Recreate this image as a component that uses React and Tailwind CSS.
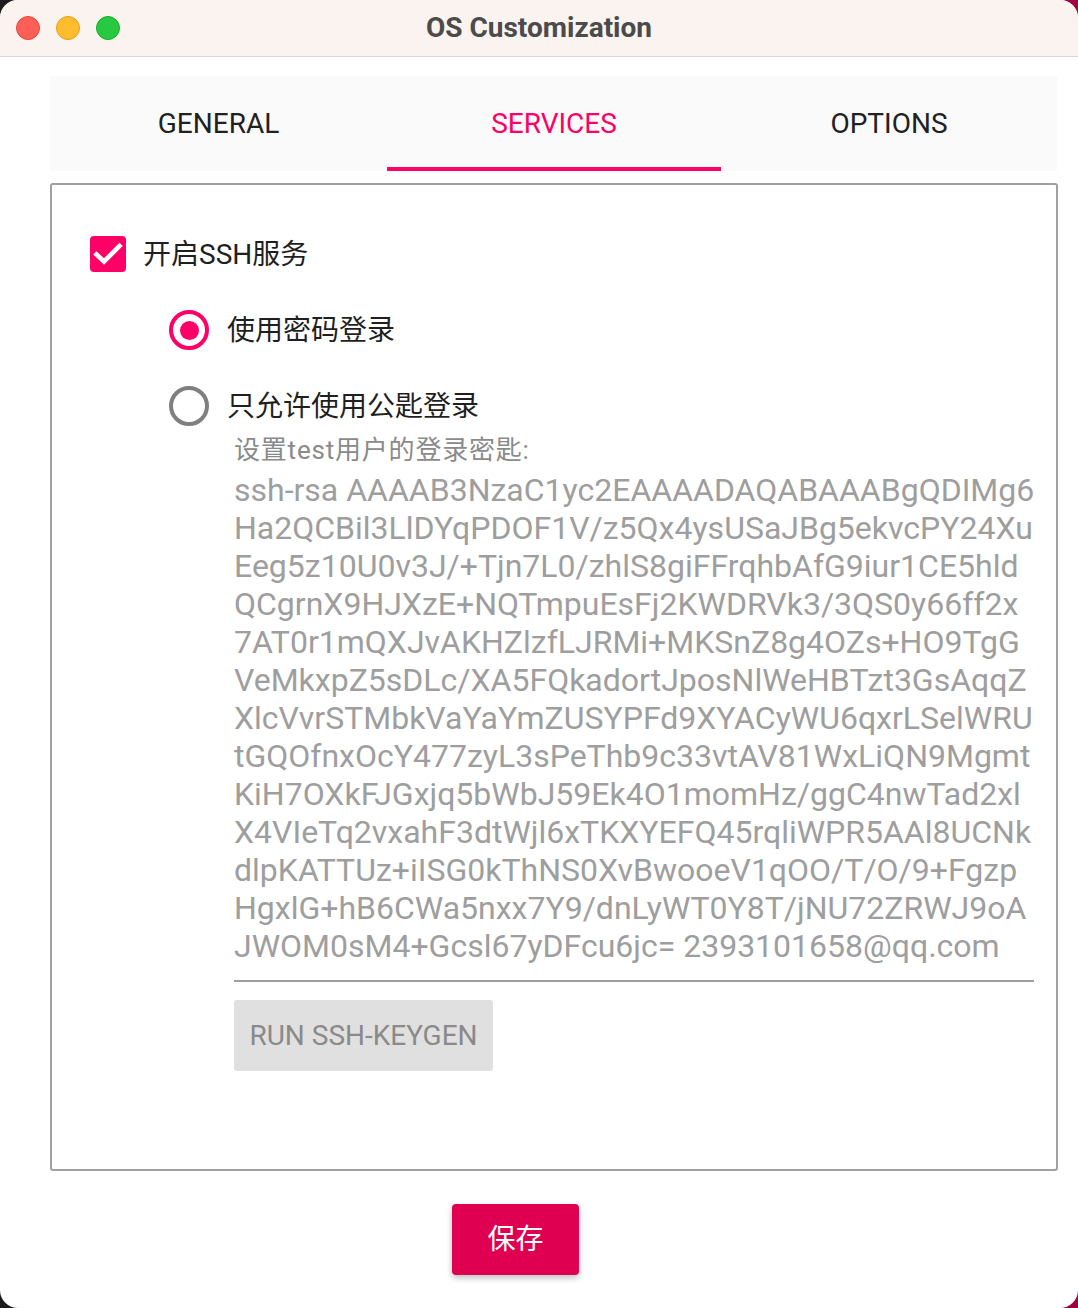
import React from "react";

const keyLines = [
  "ssh-rsa AAAAB3NzaC1yc2EAAAADAQABAAABgQDIMg6",
  "Ha2QCBil3LlDYqPDOF1V/z5Qx4ysUSaJBg5ekvcPY24Xu",
  "Eeg5z10U0v3J/+Tjn7L0/zhlS8giFFrqhbAfG9iur1CE5hld",
  "QCgrnX9HJXzE+NQTmpuEsFj2KWDRVk3/3QS0y66ff2x",
  "7AT0r1mQXJvAKHZlzfLJRMi+MKSnZ8g4OZs+HO9TgG",
  "VeMkxpZ5sDLc/XA5FQkadortJposNlWeHBTzt3GsAqqZ",
  "XlcVvrSTMbkVaYaYmZUSYPFd9XYACyWU6qxrLSelWRU",
  "tGQOfnxOcY477zyL3sPeThb9c33vtAV81WxLiQN9Mgmt",
  "KiH7OXkFJGxjq5bWbJ59Ek4O1momHz/ggC4nwTad2xl",
  "X4VIeTq2vxahF3dtWjl6xTKXYEFQ45rqliWPR5AAl8UCNk",
  "dlpKATTUz+iISG0kThNS0XvBwooeV1qOO/T/O/9+Fgzp",
  "HgxlG+hB6CWa5nxx7Y9/dnLyWT0Y8T/jNU72ZRWJ9oA",
  "JWOM0sM4+Gcsl67yDFcu6jc= 2393101658@qq.com",
];

const font = { fontFamily: 'Roboto, "Noto Sans CJK SC", sans-serif' };

export default function App() {
  return (
    <div className="w-[1078px] h-[1308px] bg-[linear-gradient(90deg,#1c1c1c_0%,#2a2a2a_60%,#a3003f_100%)]">
      <div
        className="w-[1078px] h-[1308px] bg-white rounded-[18px] overflow-hidden flex flex-col"
        style={font}
      >
        {/* Title bar */}
        <div className="relative h-[57px] shrink-0 bg-[#fbf3ef] border-b border-[#d6d6d6] flex items-center justify-center">
          <div className="absolute left-[16px] top-[16px] flex gap-[16px]">
            <span className="w-[24px] h-[24px] rounded-full bg-[#ff5f57] border border-[#e2463f]" />
            <span className="w-[24px] h-[24px] rounded-full bg-[#febc2e] border border-[#e1a116]" />
            <span className="w-[24px] h-[24px] rounded-full bg-[#28c840] border border-[#14ae2b]" />
          </div>
          <span className="text-[28px] font-bold text-[#4b4b4b] leading-none">OS Customization</span>
        </div>

        {/* Tabs */}
        <div className="ml-[50px] mt-[19px] w-[1007px] h-[95px] bg-[#fafafa] grid grid-cols-[337px_334px_336px]">
          <div className="flex items-center justify-center text-[28px] text-[#212121] pt-[1px]">GENERAL</div>
          <div className="relative flex items-center justify-center text-[28px] text-[#ff0066] pt-[1px]">
            SERVICES
            <span className="absolute left-0 right-0 bottom-0 h-[4px] bg-[#ff0066]" />
          </div>
          <div className="flex items-center justify-center text-[28px] text-[#212121] pt-[1px]">OPTIONS</div>
        </div>

        {/* Content box */}
        <div className="ml-[50px] mt-[12px] w-[1008px] h-[988px] border-2 border-[#a0a0a0] rounded-[3px] pl-[38px] pt-[49px]">
          {/* Checkbox row */}
          <div className="h-[40px] flex items-center">
            <span className="w-[36px] h-[36px] rounded-[4px] bg-[#ff0066] flex items-center justify-center">
              <svg width="36" height="36" viewBox="0 0 36 36">
                <path d="M6.5 18.5 L14 25.5 L29.5 10" fill="none" stroke="white" strokeWidth="4.6" strokeLinecap="square" />
              </svg>
            </span>
            <span className="ml-[17px] text-[28px] text-[#1f1f1f] pt-[2px]">开启SSH服务</span>
          </div>

          {/* Radio 1 */}
          <div className="mt-[36px] ml-[79px] h-[40px] flex items-center">
            <span className="w-[40px] h-[40px] rounded-full border-[4px] border-[#ff0066] flex items-center justify-center">
              <span className="w-[19px] h-[19px] rounded-full bg-[#ff0066]" />
            </span>
            <span className="ml-[18px] text-[28px] text-[#1f1f1f] pt-[2px]">使用密码登录</span>
          </div>

          {/* Radio 2 */}
          <div className="mt-[36px] ml-[79px] h-[40px] flex items-center">
            <span className="w-[40px] h-[40px] rounded-full border-[4px] border-[#7f7f7f]" />
            <span className="ml-[18px] text-[28px] text-[#1f1f1f] pt-[2px]">只允许使用公匙登录</span>
          </div>

          {/* Key section */}
          <div className="ml-[144px] w-[800px]">
            <div className="mt-[8px] h-[32px] leading-[32px] text-[26px] tracking-[0.8px] text-[#8a8a8a]">设置test用户的登录密匙:</div>
            <div className="mt-[5px] pb-[15px] border-b-2 border-[#9e9e9e] text-[32px] leading-[38px] text-[#9e9e9e] whitespace-nowrap">
              {keyLines.map((l, i) => (
                <div key={i}>{l}</div>
              ))}
            </div>
            <button className="mt-[18px] w-[259px] h-[71px] bg-[#e0e0e0] rounded-[3px] text-[28px] text-[#8a8a8a] flex items-center justify-center">
              RUN SSH-KEYGEN
            </button>
          </div>
        </div>

        {/* Save */}
        <button className="ml-[452px] mt-[33px] w-[127px] h-[71px] bg-[#e00052] rounded-[4px] text-[28px] text-white flex items-center justify-center shadow-[0_3px_6px_rgba(0,0,0,0.25)]">
          保存
        </button>
      </div>
    </div>
  );
}
